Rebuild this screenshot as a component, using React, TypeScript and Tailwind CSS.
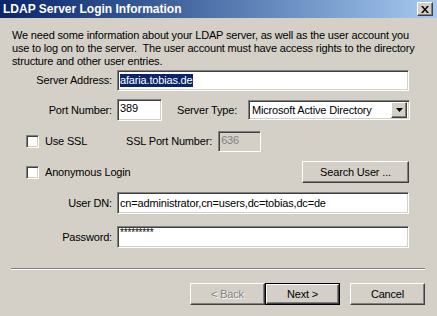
const sunken =
  "bg-white border border-t-[#808080] border-l-[#808080] border-b-white border-r-white shadow-[inset_1px_1px_0_#404040,inset_-1px_-1px_0_#d4d0c8]";
const raised =
  "bg-[#d4d0c8] border border-t-white border-l-white border-b-[#404040] border-r-[#404040] shadow-[inset_-1px_-1px_0_#808080]";

function Label({ children }: { children: React.ReactNode }) {
  return <div className="w-[113px] shrink-0 text-right pr-[1px] whitespace-nowrap">{children}</div>;
}

function Checkbox({ label }: { label: string }) {
  return (
    <div className="flex items-center">
      <div className={`w-[13px] h-[13px] ${sunken}`} />
      <span className="ml-[6px] whitespace-nowrap">{label}</span>
    </div>
  );
}

function Button({
  label,
  disabled,
  isDefault,
  className = "",
}: {
  label: string;
  disabled?: boolean;
  isDefault?: boolean;
  className?: string;
}) {
  const text = disabled ? "text-[#808080] [text-shadow:1px_1px_0_#fff]" : "text-black";
  if (isDefault) {
    return (
      <div className={`border border-black ${className}`}>
        <div className={`h-full flex items-center justify-center ${raised} ${text}`}>{label}</div>
      </div>
    );
  }
  return (
    <div className={`flex items-center justify-center ${raised} ${text} ${className}`}>{label}</div>
  );
}

export default function App() {
  return (
    <div className="w-[437px] h-[316px] overflow-hidden bg-[#d4d0c8] text-[11px] leading-[13px] tracking-[-0.17px] text-black font-['Liberation_Sans',Arial,sans-serif]">
      {/* Titelleiste */}
      <div className="h-[18px] flex items-center justify-between pl-[3px] pr-[4px] bg-gradient-to-r from-[#0a246a] to-[#a6caf0]">
        <span className="text-white font-bold text-[12px] tracking-normal">LDAP Server Login Information</span>
        <div className={`w-[16px] h-[14px] flex items-center justify-center ${raised}`}>
          <svg width="8" height="7" viewBox="0 0 8 7">
            <path d="M0 0h2l2 2.5L6 0h2L5 3.5 8 7H6L4 4.5 2 7H0l3-3.5z" fill="#000" />
          </svg>
        </div>
      </div>

      {/* Inhalt */}
      <div className="px-[12px] pt-[11px] whitespace-nowrap">
        <p>
          We need some information about your LDAP server, as well as the user account you
          <br />
          use to log on to the server.&nbsp; The user account must have access rights to the directory
          <br />
          structure and other user entries.
        </p>
      </div>

      <div className="flex items-center mt-[2px]">
        <Label>Server Address:</Label>
        <div className={`ml-[4px] w-[292px] h-[21px] px-[2px] flex items-center ${sunken}`}>
          <span className="bg-[#0a246a] text-white">afaria.tobias.de</span>
        </div>
      </div>

      <div className="flex items-center mt-[8px]">
        <Label>Port Number:</Label>
        <div className={`ml-[4px] w-[45px] h-[22px] px-[2px] pt-[2px] ${sunken}`}>389</div>
        <div className="ml-[15px] w-[60px] whitespace-nowrap">Server Type:</div>
        <div className={`ml-[11px] w-[162px] h-[20px] flex items-center justify-between pl-[3px] pr-[2px] ${sunken}`}>
          <span className="whitespace-nowrap">Microsoft Active Directory</span>
          <div className={`w-[16px] h-[16px] flex items-center justify-center ${raised}`}>
            <svg width="7" height="4" viewBox="0 0 7 4">
              <path d="M0 0h7L3.5 4z" fill="#000" />
            </svg>
          </div>
        </div>
      </div>

      <div className="flex items-center mt-[10px] pl-[26px]">
        <div className="w-[100px]">
          <Checkbox label="Use SSL" />
        </div>
        <div className="whitespace-nowrap">SSL Port Number:</div>
        <div className="ml-[6px] w-[43px] h-[21px] px-[2px] pt-[2px] text-[#808080] border border-t-[#808080] border-l-[#808080] border-b-white border-r-white shadow-[inset_1px_1px_0_#404040,inset_-1px_-1px_0_#d4d0c8]">
          636
        </div>
      </div>

      <div className="flex items-center justify-between mt-[9px] pl-[26px] pr-[28px]">
        <Checkbox label="Anonymous Login" />
        <Button label="Search User ..." className="w-[107px] h-[22px]" />
      </div>

      <div className="flex items-center mt-[9px]">
        <Label>User DN:</Label>
        <div className={`ml-[4px] w-[292px] h-[22px] px-[2px] flex items-center ${sunken}`}>
          cn=administrator,cn=users,dc=tobias,dc=de
        </div>
      </div>

      <div className="flex items-center mt-[12px]">
        <Label>Password:</Label>
        <div className={`ml-[4px] w-[292px] h-[22px] px-[2px] pt-[1px] text-[10px] leading-[10px] ${sunken}`}>
          *********
        </div>
      </div>

      {/* Trennlinie */}
      <div className="mx-[11px] mt-[20px] w-[414px] h-[2px] border-t border-t-[#808080] border-b border-b-white" />

      <div className="flex justify-end pr-[12px] mt-[13px]">
        <Button label="< Back" disabled className="w-[75px] h-[22px]" />
        <Button label="Next >" isDefault className="w-[75px] h-[22px]" />
        <Button label="Cancel" className="ml-[10px] w-[75px] h-[22px]" />
      </div>
    </div>
  );
}
